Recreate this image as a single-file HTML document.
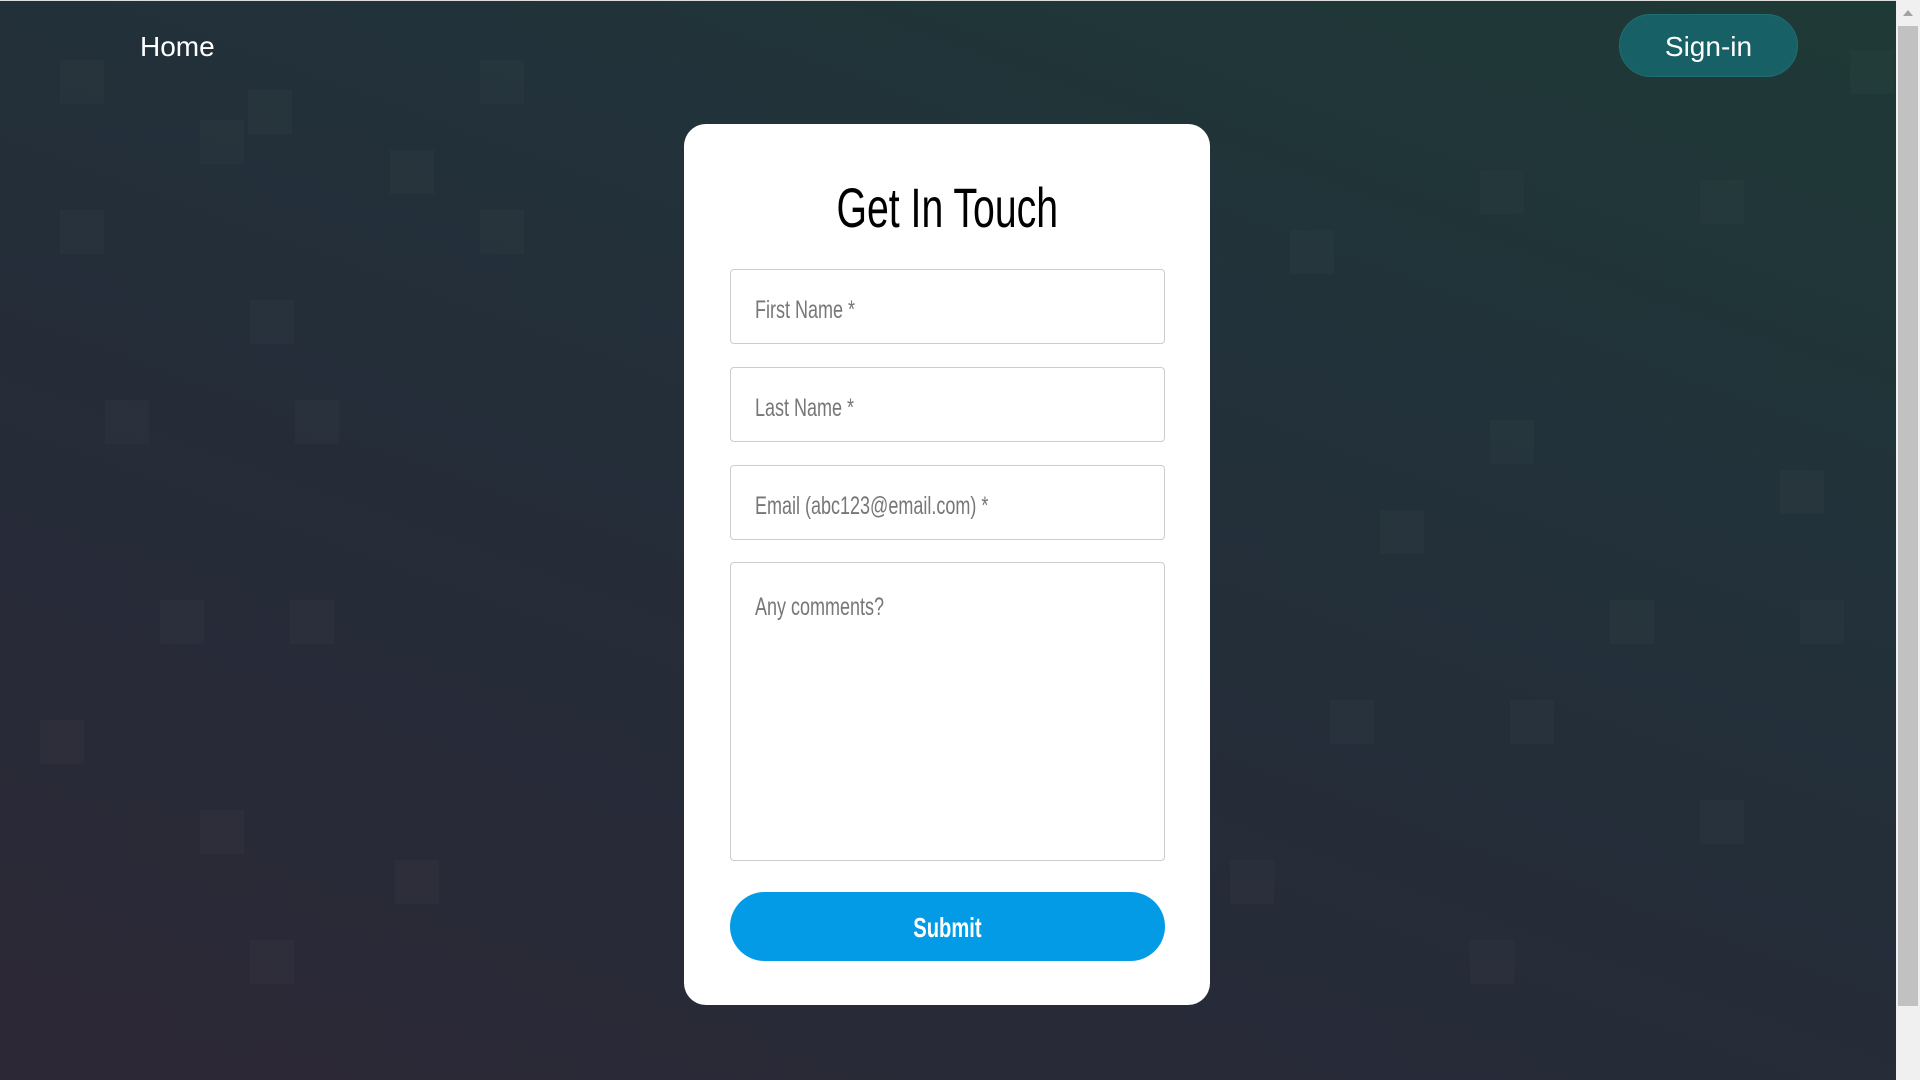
<!DOCTYPE html>
<html><head><meta charset="utf-8"><style>
html,body{margin:0;padding:0;width:1920px;height:1080px;overflow:hidden}
body{position:relative;font-family:"Liberation Sans",sans-serif;
background:linear-gradient(20deg,#2d2836 0%,#262b38 35%,#22313a 65%,#1e3a36 100%);}
.top{position:absolute;left:0;top:0;width:1896px;height:1px;background:#ddd}
.home{position:absolute;left:140px;top:31px;color:#fff;font-size:28px}
.sign{position:absolute;left:1619px;top:14px;width:179px;height:63px;border-radius:32px;background:#176166;border:1px solid #1f6e72;color:#fff;font-size:28px;text-align:center;line-height:63px;box-sizing:border-box}
.sb{position:absolute;left:1896px;top:0;width:24px;height:1080px;background:#f0f0f0}
.sb .th{position:absolute;left:2px;top:26px;width:20px;height:980px;background:#c1c1c1}
.sb .ar{position:absolute;left:7px;top:10px;width:0;height:0;border-left:5px solid transparent;border-right:5px solid transparent;border-bottom:6px solid #a3a3a3}
.card{position:absolute;left:684px;top:124px;width:526px;height:881px;background:#fff;border-radius:22px}
.c{font-family:"Liberation Sans Narrow","Liberation Sans",sans-serif;font-stretch:condensed}
.title{position:absolute;left:0;width:526px;text-align:center;font-size:56px;line-height:60px;color:#000}
.title span{display:inline-block;transform:scaleX(0.7)}
.f{position:absolute;left:46px;width:435px;height:75px;border:1px solid #ccc;border-radius:4px;box-sizing:border-box}
.f span{position:absolute;left:24px;top:26px;font-size:25px;color:#777;transform:scaleX(0.72);transform-origin:left top;white-space:nowrap}
.btn{position:absolute;left:46px;top:768px;width:435px;height:69px;border-radius:35px;background:#039be5;color:#fff;text-align:center;line-height:72px;font-size:28px;font-weight:bold}
.btn span{display:inline-block;transform:scaleX(0.72)}
.sq{position:absolute;width:44px;height:44px;background:rgba(255,255,255,0.02)}
</style></head><body>
<div class="top"></div>
<div class="home">Home</div>
<div class="sign">Sign-in</div>
<div class="card">
<div class="title c" style="top:54px"><span>Get In Touch</span></div>
<div class="f" style="top:145px"><span class="c">First Name *</span></div>
<div class="f" style="top:243px"><span class="c">Last Name *</span></div>
<div class="f" style="top:341px"><span class="c">Email (abc123@email.com) *</span></div>
<div class="f" style="top:438px;height:299px"><span class="c" style="top:30px">Any comments?</span></div>
<div class="btn c"><span>Submit</span></div>
</div>
<div class="sb"><div class="ar"></div><div class="th"></div></div>
<div style="position:absolute;left:0;top:0;width:1896px;height:1080px;pointer-events:none">
<div class="sq" style="left:60px;top:60px"></div><div class="sq" style="left:200px;top:120px"></div><div class="sq" style="left:248px;top:90px"></div><div class="sq" style="left:390px;top:150px"></div><div class="sq" style="left:480px;top:60px"></div><div class="sq" style="left:60px;top:210px"></div><div class="sq" style="left:250px;top:300px"></div><div class="sq" style="left:480px;top:210px"></div><div class="sq" style="left:105px;top:400px"></div><div class="sq" style="left:295px;top:400px"></div><div class="sq" style="left:160px;top:600px"></div><div class="sq" style="left:290px;top:600px"></div><div class="sq" style="left:40px;top:720px"></div><div class="sq" style="left:200px;top:810px"></div><div class="sq" style="left:395px;top:860px"></div><div class="sq" style="left:250px;top:940px"></div>
<div class="sq" style="left:1290px;top:230px"></div><div class="sq" style="left:1480px;top:170px"></div><div class="sq" style="left:1700px;top:180px"></div><div class="sq" style="left:1490px;top:420px"></div><div class="sq" style="left:1380px;top:510px"></div><div class="sq" style="left:1610px;top:600px"></div><div class="sq" style="left:1800px;top:600px"></div><div class="sq" style="left:1330px;top:700px"></div><div class="sq" style="left:1510px;top:700px"></div><div class="sq" style="left:1700px;top:800px"></div><div class="sq" style="left:1230px;top:860px"></div><div class="sq" style="left:1470px;top:940px"></div><div class="sq" style="left:1780px;top:470px"></div><div class="sq" style="left:1850px;top:50px"></div>
</div>
</body></html>
